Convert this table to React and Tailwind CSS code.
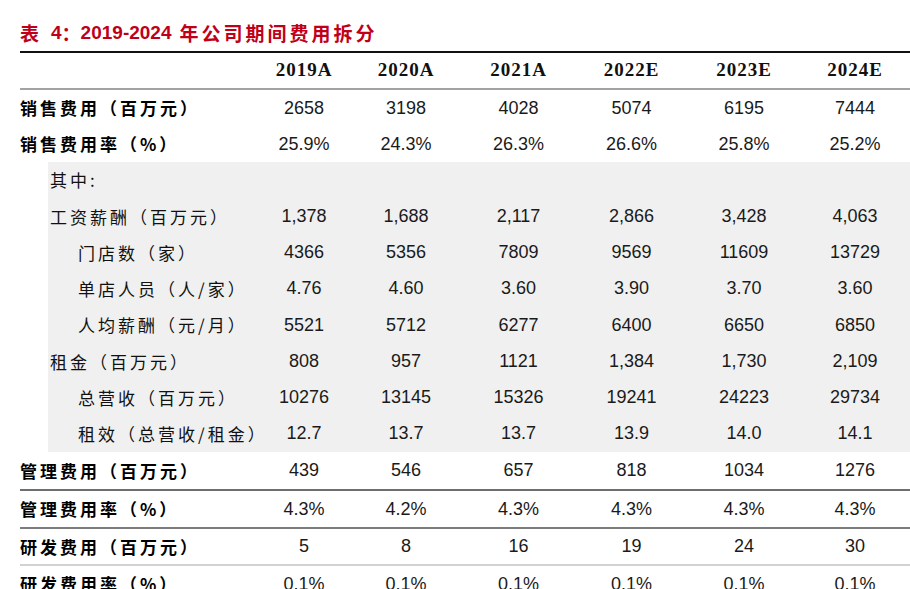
import React from 'react';

const years = ['2019A', '2020A', '2021A', '2022E', '2023E', '2024E'];

const topRows = [
  { label: '销售费用（百万元）', values: ['2658', '3198', '4028', '5074', '6195', '7444'] },
  { label: '销售费用率（%）', values: ['25.9%', '24.3%', '26.3%', '26.6%', '25.8%', '25.2%'] },
];

const subRows = [
  { label: '其中:', indent: false, values: [] },
  { label: '工资薪酬（百万元）', indent: false, values: ['1,378', '1,688', '2,117', '2,866', '3,428', '4,063'] },
  { label: '门店数（家）', indent: true, values: ['4366', '5356', '7809', '9569', '11609', '13729'] },
  { label: '单店人员（人/家）', indent: true, values: ['4.76', '4.60', '3.60', '3.90', '3.70', '3.60'] },
  { label: '人均薪酬（元/月）', indent: true, values: ['5521', '5712', '6277', '6400', '6650', '6850'] },
  { label: '租金（百万元）', indent: false, values: ['808', '957', '1121', '1,384', '1,730', '2,109'] },
  { label: '总营收（百万元）', indent: true, values: ['10276', '13145', '15326', '19241', '24223', '29734'] },
  { label: '租效（总营收/租金）', indent: true, values: ['12.7', '13.7', '13.7', '13.9', '14.0', '14.1'] },
];

const cjk = { fontFamily: '"Noto Sans CJK SC", "Noto Sans", sans-serif' };
const num = { fontFamily: '"Liberation Sans", Arial, sans-serif' };

const Values = ({ values }) =>
  values.map((v, i) => (
    <div key={i} className="flex items-center justify-center text-[18px] text-[#1a1a1a]" style={num}>
      {v}
    </div>
  ));

const BoldRow = ({ label, values, h }) => (
  <div className={`grid grid-cols-[238px_92px_112px_113px_113px_112px_110px] ${h}`}>
    <div className="flex items-center whitespace-nowrap text-[17px] font-bold tracking-[3px] text-black" style={cjk}>
      {label}
    </div>
    <Values values={values} />
  </div>
);

export default function App() {
  return (
    <div className="w-[910px] h-[589px] overflow-hidden bg-white">
      <div className="ml-[20px]">
        {/* title */}
        <div className="h-[51px] pt-[20px]">
          <div className="flex items-center whitespace-nowrap text-[19px] font-bold leading-[26px] text-[#c00018]">
            <span className="tracking-[2px]" style={cjk}>表</span>
            <span className="ml-[10px]" style={num}>4</span>
            <span style={cjk}>：</span>
            <span style={num}>2019-2024</span>
            <span className="ml-[8px] tracking-[3px]" style={cjk}>年公司期间费用拆分</span>
          </div>
        </div>
        <div className="h-[2px] bg-[#111]" />

        {/* header */}
        <div className="grid grid-cols-[238px_92px_112px_113px_113px_112px_110px] h-[35px]">
          <div />
          {years.map((y) => (
            <div
              key={y}
              className="flex items-center justify-center text-[19px] font-bold tracking-[1px] text-[#111]"
              style={{ fontFamily: '"Liberation Serif", "Times New Roman", serif' }}
            >
              {y}
            </div>
          ))}
        </div>
        <div className="h-[2px] bg-[#a3a3a3]" />

        {topRows.map((r) => (
          <BoldRow key={r.label} label={r.label} values={r.values} h="h-[36px]" />
        ))}

        {/* breakdown block */}
        <div className="ml-[28px] bg-[#f0f0f0]">
          {subRows.map((r) => (
            <div key={r.label} className="grid grid-cols-[210px_92px_112px_113px_113px_112px_110px] h-[36.25px]">
              <div
                className={`flex items-center whitespace-nowrap text-[17px] tracking-[3px] text-[#111] ${r.indent ? 'pl-[30px]' : 'pl-[2px]'}`}
                style={cjk}
              >
                {r.label}
              </div>
              <Values values={r.values} />
            </div>
          ))}
        </div>

        <BoldRow label="管理费用（百万元）" values={['439', '546', '657', '818', '1034', '1276']} h="h-[37px]" />
        <div className="h-[2px] bg-[#6e6e6e]" />
        <BoldRow label="管理费用率（%）" values={['4.3%', '4.2%', '4.3%', '4.3%', '4.3%', '4.3%']} h="h-[36px]" />
        <div className="h-[2px] bg-[#7c7c7c]" />
        <BoldRow label="研发费用（百万元）" values={['5', '8', '16', '19', '24', '30']} h="h-[35px]" />
        <div className="h-[2px] bg-[#d2d2d2]" />
        <BoldRow label="研发费用率（%）" values={['0.1%', '0.1%', '0.1%', '0.1%', '0.1%', '0.1%']} h="h-[36px]" />
      </div>
    </div>
  );
}
